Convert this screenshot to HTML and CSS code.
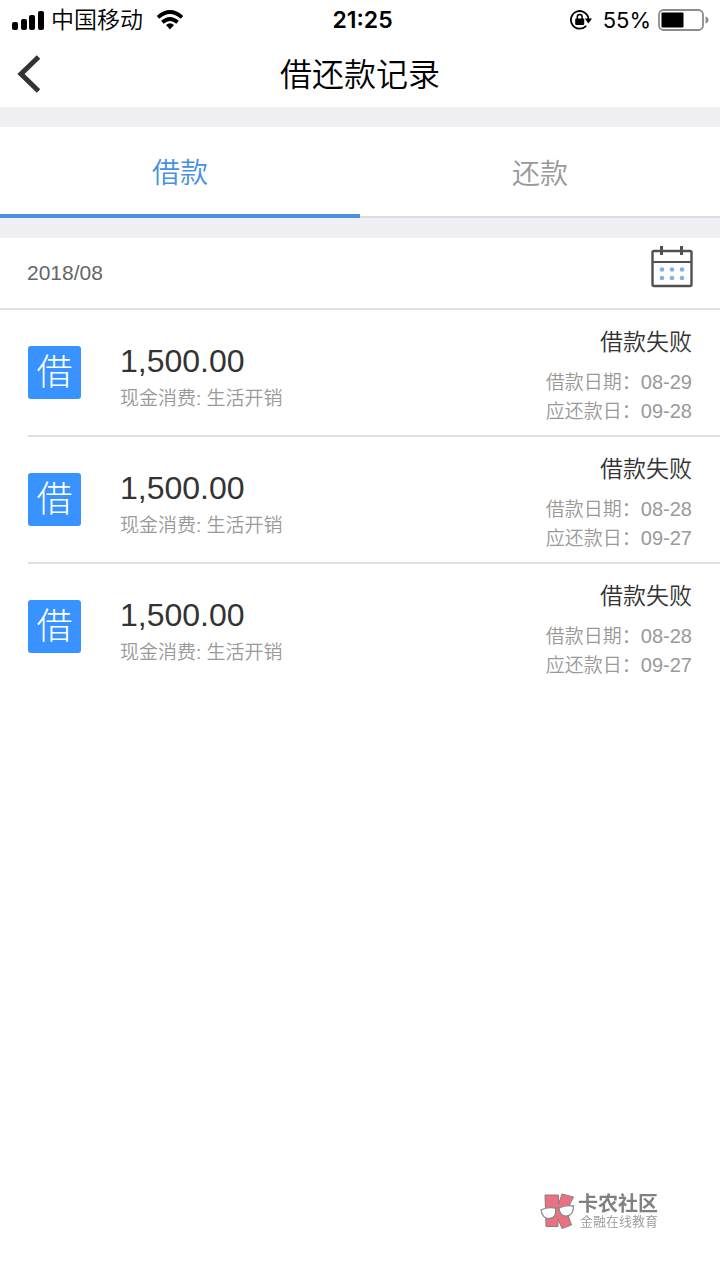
FILE: index.html
```html
<!DOCTYPE html>
<html lang="zh-CN">
<head>
    <meta charset="UTF-8">
    <meta name="viewport" content="width=device-width, initial-scale=1.0">
    <title>借还款记录</title>
    <link rel="stylesheet" href="styles.css">
</head>
<body>
    <!-- 状态栏 -->
    <div class="status">
        <div class="status-left">
            <svg width="32" height="20" viewBox="0 0 32 20">
                <rect x="0" y="12" width="6" height="8" rx="2"/>
                <rect x="9" y="9" width="6" height="11" rx="2"/>
                <rect x="17" y="5" width="6" height="15" rx="2"/>
                <rect x="26" y="1" width="6" height="19" rx="2"/>
            </svg>
            <span class="carrier">中国移动</span>
            <svg class="wifi" width="28" height="20" viewBox="0 0 28 20">
                <g fill="none" stroke="#000" stroke-width="3.800">
                    <path d="M2 7.300Q14-3.300 26 7.300"/>
                    <path d="M6.400 12.300Q14 5.600 21.600 12.300"/>
                </g>
                <path d="M14 19.500l-4-4.400q4-3.600 8 0z"/>
            </svg>
        </div>
        <span class="time">21:25</span>
        <div class="status-right">
            <svg width="22" height="20" viewBox="0 0 22 20">
                <path d="M16.200 15.800A8.800 8.800 0 1 1 18.500 9" fill="none" stroke="#000" stroke-width="1.800"/>
                <path d="M14.800 8.500h7.200l-3.600 5z"/>
                <rect x="5.200" y="8.400" width="9" height="6.600" rx="1"/>
                <path d="M7.300 9V7a2.400 2.400 0 0 1 4.800 0v2" fill="none" stroke="#000" stroke-width="1.500"/>
            </svg>
            <span class="percent">55%</span>
            <svg width="51" height="22" viewBox="0 0 51 22">
                <rect x="1" y="1" width="44" height="20" rx="4.500" fill="none" stroke="#8c8c8c" stroke-width="1.800"/>
                <rect x="3.500" y="3.500" width="22" height="15" rx="1"/>
                <path d="M47.500 7.500q3 .8 3 3.500t-3 3.500z" fill="#8c8c8c"/>
            </svg>
        </div>
    </div>

    <header class="navbar">
        <button class="back" aria-label="返回">
            <svg width="24" height="38" viewBox="0 0 24 38">
                <path d="M22.500 2L5 19l17.500 17" fill="none" stroke="#333" stroke-width="5"/>
            </svg>
        </button>
        <h1>借还款记录</h1>
    </header>

    <nav class="tabs">
        <button class="tab active">借款</button>
        <button class="tab">还款</button>
    </nav>

    <main>
        <div class="month">
            <span>2018/08</span>
            <button class="calendar" aria-label="选择月份">
                <svg width="42" height="42" viewBox="0 0 42 42">
                    <rect x="1.500" y="5" width="39" height="35" rx="1.500" fill="none" stroke="#505050" stroke-width="2.400"/>
                    <path d="M2 16h38" stroke="#505050" stroke-width="2.200"/>
                    <path d="M10.500 0v9M30.500 0v9" stroke="#505050" stroke-width="3"/>
                    <g fill="#7fb2ea">
                        <circle cx="11" cy="23.500" r="2.300"/>
                        <circle cx="21" cy="23.500" r="2.300"/>
                        <circle cx="31" cy="23.500" r="2.300"/>
                        <circle cx="11" cy="32" r="2.300"/>
                        <circle cx="21" cy="32" r="2.300"/>
                        <circle cx="31" cy="32" r="2.300"/>
                    </g>
                </svg>
            </button>
        </div>

        <!-- 借款列表 -->
        <ul class="list">
            <li class="item">
                <span class="icon">借</span>
                <div class="info">
                    <p class="amount">1,500.00</p>
                    <p class="desc">现金消费: 生活开销</p>
                </div>
                <div class="detail">
                    <p class="state">借款失败</p>
                    <p class="date">借款日期：<time>08-29</time></p>
                    <p class="date">应还款日：<time>09-28</time></p>
                </div>
            </li>
            <li class="item">
                <span class="icon">借</span>
                <div class="info">
                    <p class="amount">1,500.00</p>
                    <p class="desc">现金消费: 生活开销</p>
                </div>
                <div class="detail">
                    <p class="state">借款失败</p>
                    <p class="date">借款日期：<time>08-28</time></p>
                    <p class="date">应还款日：<time>09-27</time></p>
                </div>
            </li>
            <li class="item">
                <span class="icon">借</span>
                <div class="info">
                    <p class="amount">1,500.00</p>
                    <p class="desc">现金消费: 生活开销</p>
                </div>
                <div class="detail">
                    <p class="state">借款失败</p>
                    <p class="date">借款日期：<time>08-28</time></p>
                    <p class="date">应还款日：<time>09-27</time></p>
                </div>
            </li>
        </ul>
    </main>

    <!-- 水印 -->
    <div class="watermark">
        <svg width="38" height="38" viewBox="0 0 38 38">
            <path d="M5 3h13.500v9L22 2l11.500 3-7 14L31.500 33 22 36.500 18 27v7.500H6z" fill="#ea7280" stroke="#8c7c7e" stroke-width="1"/>
            <g fill="#fff" stroke="#8a8a8a" stroke-width="1.300">
                <path d="M1 18q6-3.500 14.500-2 1.500 10-6 10.500Q2.500 27 1 18z"/>
                <path d="M19 16q7-3.500 14.500-2 0 9-6.500 10-7.500.5-8-8z"/>
            </g>
            <path d="M15.500 17q1.500-1.500 3.500-1" fill="none" stroke="#8a8a8a" stroke-width="1.300"/>
        </svg>
        <div>
            <p class="mark-name">卡农社区</p>
            <p class="mark-sub">金融在线教育</p>
        </div>
    </div>
</body>
</html>
```
FILE: styles.css
```css
* {
    margin: 0;
    padding: 0;
    box-sizing: border-box;
}
body {
    background-color: #fff;
    color: #333;
    font-family: "Liberation Sans", "Noto Sans CJK SC", sans-serif;
    font-weight: 350;
}
button {
    border: none;
    background: none;
    font-family: inherit;
    font-weight: inherit;
    cursor: pointer;
}
svg {
    display: block;
}

/* 状态栏 */
.status {
    display: grid;
    grid-template-columns: 1fr auto 1fr;
    align-items: center;
    height: 40px;
    padding: 0 11px 0 12px;
    color: #000;
    font-family: Inter, "Noto Sans CJK SC", sans-serif;
    font-size: 22px;
}
.status-left, .status-right {
    display: flex;
    align-items: center;
}
.status-right {
    justify-content: flex-end;
    gap: 7px;
}
.carrier {
    margin: 0 13px 0 7px;
    font-size: 23px;
    line-height: 40px;
}
.time {
    padding-left: 4px;
    font-size: 23px;
    font-weight: 600;
}
.percent {
    margin-left: 4px;
    font-weight: 400;
}

.navbar {
    display: grid;
    grid-template-columns: 60px 1fr 60px;
    align-items: center;
    height: 67px;
}
.back {
    padding-left: 16px;
}
.navbar h1 {
    padding-top: 3px;
    color: #000;
    font-size: 32px;
    font-weight: inherit;
    line-height: 64px;
    text-align: center;
}

/* 标签切换 */
.tabs {
    display: flex;
    border-top: 20px solid #efeff4;
    border-bottom: 20px solid #efeff4;
}
.tab {
    flex: 1;
    height: 91px;
    border-bottom: 2px solid #dcdcde;
    color: #999;
    font-size: 28px;
}
.tab.active {
    border-bottom: 4px solid #4990e2;
    color: #4990e2;
}

.month {
    display: flex;
    justify-content: space-between;
    align-items: center;
    height: 72px;
    padding: 0 27px;
    border-bottom: 2px solid #e0e0e0;
    color: #666;
    font-size: 21px;
}
.calendar {
    padding-bottom: 12px;
}

/* 借款列表 */
.list {
    padding-left: 28px;
    list-style: none;
}
.item {
    display: flex;
    align-items: center;
    padding: 9px 28px 9px 0;
    border-bottom: 2px solid #e0e0e0;
}
.item:last-child {
    border-bottom: none;
}
.icon {
    width: 53px;
    height: 53px;
    border-radius: 3px;
    background-color: #3892ff;
    color: #fff;
    font-size: 36px;
    font-weight: 300;
    line-height: 54px;
    text-align: center;
}
.info {
    flex: 1;
    margin-left: 39px;
    padding-top: 12px;
}
.amount {
    font-size: 32px;
    line-height: 40px;
}
.desc {
    color: #999;
    font-size: 19px;
    line-height: 36px;
}
.detail {
    padding-top: 6px;
    text-align: right;
}
.state {
    margin-bottom: 8px;
    font-size: 23px;
    line-height: 35px;
}
.date {
    color: #999;
    font-size: 19px;
    line-height: 29px;
}
.date time {
    font-size: 20px;
}

/* 水印 */
.watermark {
    position: fixed;
    right: 62px;
    bottom: 50px;
    display: flex;
    align-items: center;
    color: #808080;
}
.mark-name {
    font-size: 20px;
    font-weight: 700;
    line-height: 22px;
}
.mark-sub {
    padding-left: 2px;
    color: #999;
    font-size: 13px;
    line-height: 14px;
}
```
